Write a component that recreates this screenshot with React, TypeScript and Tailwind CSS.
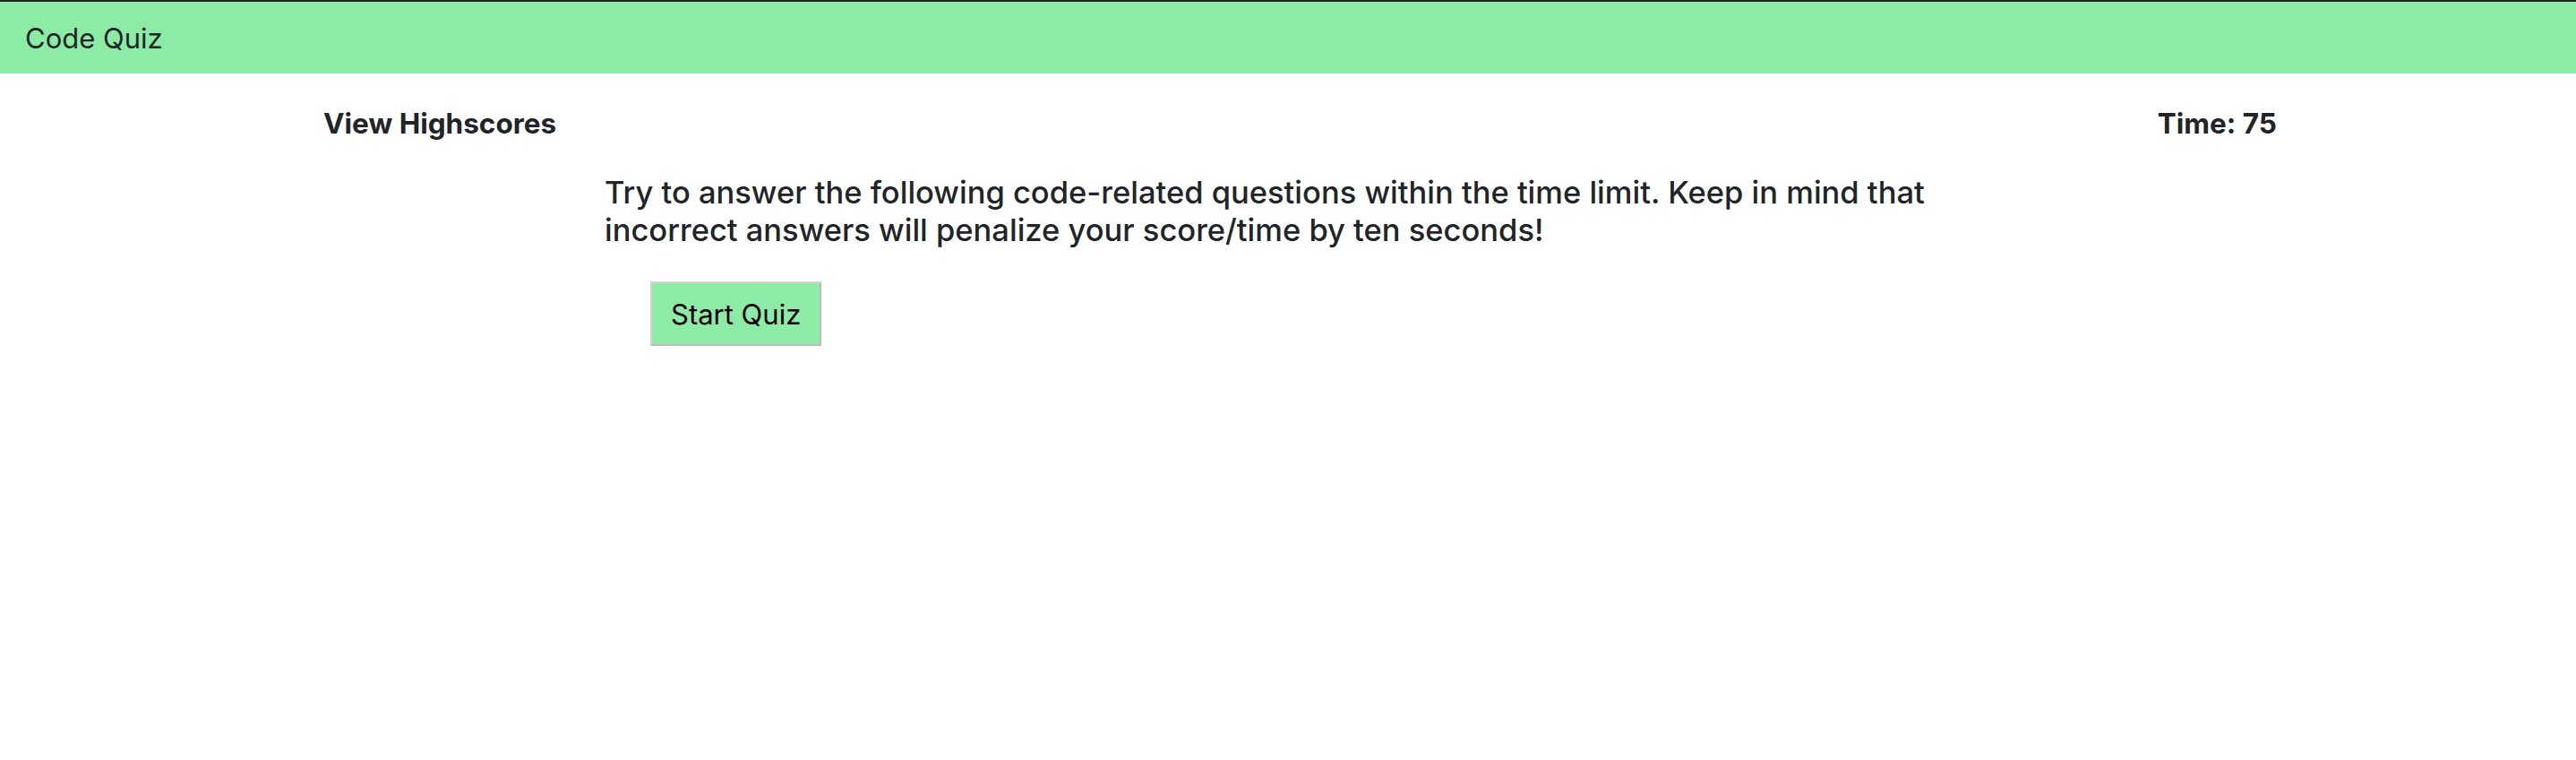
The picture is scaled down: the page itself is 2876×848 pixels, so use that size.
import React from "react";

export default function App() {
  const font = { fontFamily: "Inter, 'Noto Sans', 'Liberation Sans', sans-serif" };
  return (
    <div className="min-h-[848px] w-full bg-white text-[#212529]" style={font}>
      <nav className="flex h-[82px] items-center border-t-2 border-[#222222] bg-[#8ceca6] pl-[28px]">
        <span className="text-[31px] leading-none font-normal text-[#212529]">Code Quiz</span>
      </nav>
      <div className="mt-[38px] flex justify-between pl-[361px] pr-[334px]">
        <span className="text-[31.5px] leading-[36px] font-bold">View Highscores</span>
        <span className="text-[31.5px] leading-[36px] font-bold">Time: 75</span>
      </div>
      <div className="ml-[675px] mt-[38px] w-[1500px]">
        <p className="text-[34.5px] leading-[42px] font-medium">
          Try to answer the following code-related questions within the time limit. Keep in mind that incorrect answers will penalize your score/time by ten seconds!
        </p>
        <button className="ml-[51px] mt-[36px] flex h-[72px] items-center border-2 border-t-[#d4d4d4] border-l-[#d4d4d4] border-r-[#bdbdbd] border-b-[#bdbdbd] bg-[#8ceca6] px-[21px] text-[31px] leading-none text-black">
          Start Quiz
        </button>
      </div>
    </div>
  );
}
